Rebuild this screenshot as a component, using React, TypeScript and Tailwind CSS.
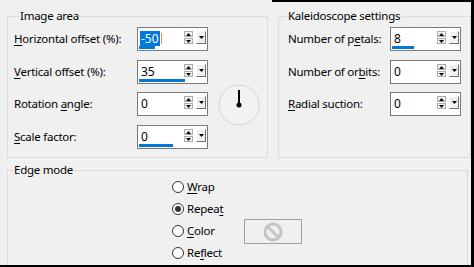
import React from 'react';

type SpinProps = { value: string; bar?: number; selected?: boolean };

const Arrow: React.FC<{ down?: boolean; w?: number }> = ({ down, w = 5 }) => (
  <svg width={w} height={3} viewBox="0 0 5 3" className="block">
    {down ? <polygon points="0,0 5,0 2.5,3" fill="#000" /> : <polygon points="0,3 5,3 2.5,0" fill="#000" />}
  </svg>
);

const Spin: React.FC<SpinProps> = ({ value, bar, selected }) => (
  <div className="relative w-[71px] h-[24px] border border-[#7a7a7a] bg-white flex items-start tracking-normal">
    <div className="pl-[2px] pt-[3px] h-[17px] flex items-start text-[12px]">
      {selected ? (
        <>
          <span className="bg-[#0078d7] text-white leading-[15px] h-[15px] px-px">{value}</span>
          <span className="w-px h-[11px] mt-[2px] ml-px bg-[#ff8a1c]" />
        </>
      ) : (
        <span className="leading-[15px] px-px">{value}</span>
      )}
    </div>
    <div className="absolute left-[46px] top-[3px] flex flex-col gap-px">
      <div className="w-[9px] h-[6px] border border-[#adadad] bg-[#f0f0f0] flex items-center justify-center">
        <Arrow />
      </div>
      <div className="w-[9px] h-[6px] border border-[#adadad] bg-[#f0f0f0] flex items-center justify-center">
        <Arrow down />
      </div>
    </div>
    <div className="absolute left-[58px] top-[3px] w-[10px] h-[13px] bg-[#f0f0f0] border-t border-l border-white border-r border-b border-r-[#707070] border-b-[#707070] flex items-center justify-center">
      <Arrow down />
    </div>
    {bar ? <div className="absolute left-px bottom-px h-[3px] bg-[#0078d7]" style={{ width: bar }} /> : null}
  </div>
);

const U: React.FC<{ children: React.ReactNode }> = ({ children }) => <span className="underline underline-offset-2">{children}</span>;

const Row: React.FC<{ label: React.ReactNode; labelW: string; spin: SpinProps; mt: string }> = ({ label, labelW, spin, mt }) => (
  <div className={`flex items-center h-[24px] ${mt}`}>
    <div className={labelW}>{label}</div>
    <Spin {...spin} />
  </div>
);

const Radio: React.FC<{ checked?: boolean; label: React.ReactNode }> = ({ checked, label }) => (
  <div className="flex items-center h-[22px]">
    <div className="w-[12px] h-[12px] rounded-full border border-[#333] bg-white flex items-center justify-center">
      {checked && <div className="w-[6px] h-[6px] rounded-full bg-[#333]" />}
    </div>
    <span className="ml-[3px]">{label}</span>
  </div>
);

export default function App() {
  return (
    <div className="relative w-[474px] h-[267px] bg-[#f0f0f0] overflow-hidden text-[11.5px] tracking-[-0.25px] text-black font-['Noto_Sans',sans-serif]">
      <div className="flex pl-[7px] pt-[8px] gap-[10px]">
        <fieldset className="w-[261px] h-[150px] border border-[#dcdcdc] px-[6px]">
          <legend className="px-px ml-[5px] leading-[16px]">Image area</legend>
          <div className="flex items-start">
            <div className="flex flex-col">
              <Row mt="mt-[3px]" labelW="w-[123px]" label={<><U>H</U>orizontal offset (%):</>} spin={{ value: '-50', bar: 16, selected: true }} />
              <Row mt="mt-[9px]" labelW="w-[123px]" label={<><U>V</U>ertical offset (%):</>} spin={{ value: '35', bar: 46 }} />
              <Row mt="mt-[8px]" labelW="w-[123px]" label={<>Rotation <U>a</U>ngle:</>} spin={{ value: '0' }} />
              <Row mt="mt-[9px]" labelW="w-[123px]" label={<><U>S</U>cale factor:</>} spin={{ value: '0', bar: 34 }} />
            </div>
            <svg width={42} height={42} viewBox="0 0 42 42" className="ml-[10px] mt-[60px]">
              <circle cx={21} cy={21} r={20} fill="#f2f2f2" stroke="#d4d4d4" />
              <line x1={21} y1={6} x2={21} y2={21} stroke="#000" strokeWidth={2} />
              <circle cx={21} cy={21} r={2.5} fill="#000" />
            </svg>
          </div>
        </fieldset>
        <fieldset className="w-[190px] h-[150px] border border-[#dcdcdc] px-[9px]">
          <legend className="px-px -ml-[1px] leading-[16px]">Kaleidoscope settings</legend>
          <Row mt="mt-[3px]" labelW="w-[102px]" label={<>Number of p<U>e</U>tals:</>} spin={{ value: '8', bar: 22 }} />
          <Row mt="mt-[9px]" labelW="w-[102px]" label={<>Number of or<U>b</U>its:</>} spin={{ value: '0' }} />
          <Row mt="mt-[8px]" labelW="w-[102px]" label={<><U>R</U>adial suction:</>} spin={{ value: '0' }} />
        </fieldset>
      </div>
      <div className="pl-[7px] pt-[4px]">
        <fieldset className="w-[461px] h-[104px] border border-[#dcdcdc] pl-[164px]">
          <legend className="px-px ml-[-159px] leading-[16px]">Edge mode</legend>
          <div className="flex items-start">
            <div className="flex flex-col w-[72px] -mt-[2px]">
              <Radio label={<><U>W</U>rap</>} />
              <Radio checked label={<>Repea<U>t</U></>} />
              <Radio label={<><U>C</U>olor</>} />
              <Radio label={<>Re<U>f</U>lect</>} />
            </div>
            <div className="mt-[41px] w-[58px] h-[25px] border border-[#a0a0a0] flex items-center justify-center">
              <svg width={20} height={20} viewBox="0 0 20 20">
                <circle cx={10} cy={10} r={8} fill="none" stroke="#c4c4c4" strokeWidth={3} />
                <line x1={4.5} y1={4.5} x2={15.5} y2={15.5} stroke="#c4c4c4" strokeWidth={3} />
              </svg>
            </div>
          </div>
        </fieldset>
      </div>
      <div className="absolute right-0 top-0 w-[3px] h-full bg-black" />
      <div className="absolute left-0 bottom-0 w-full h-[2px] bg-black" />
      <div className="absolute left-[272px] top-0 right-0 h-[2px] bg-black" />
    </div>
  );
}
